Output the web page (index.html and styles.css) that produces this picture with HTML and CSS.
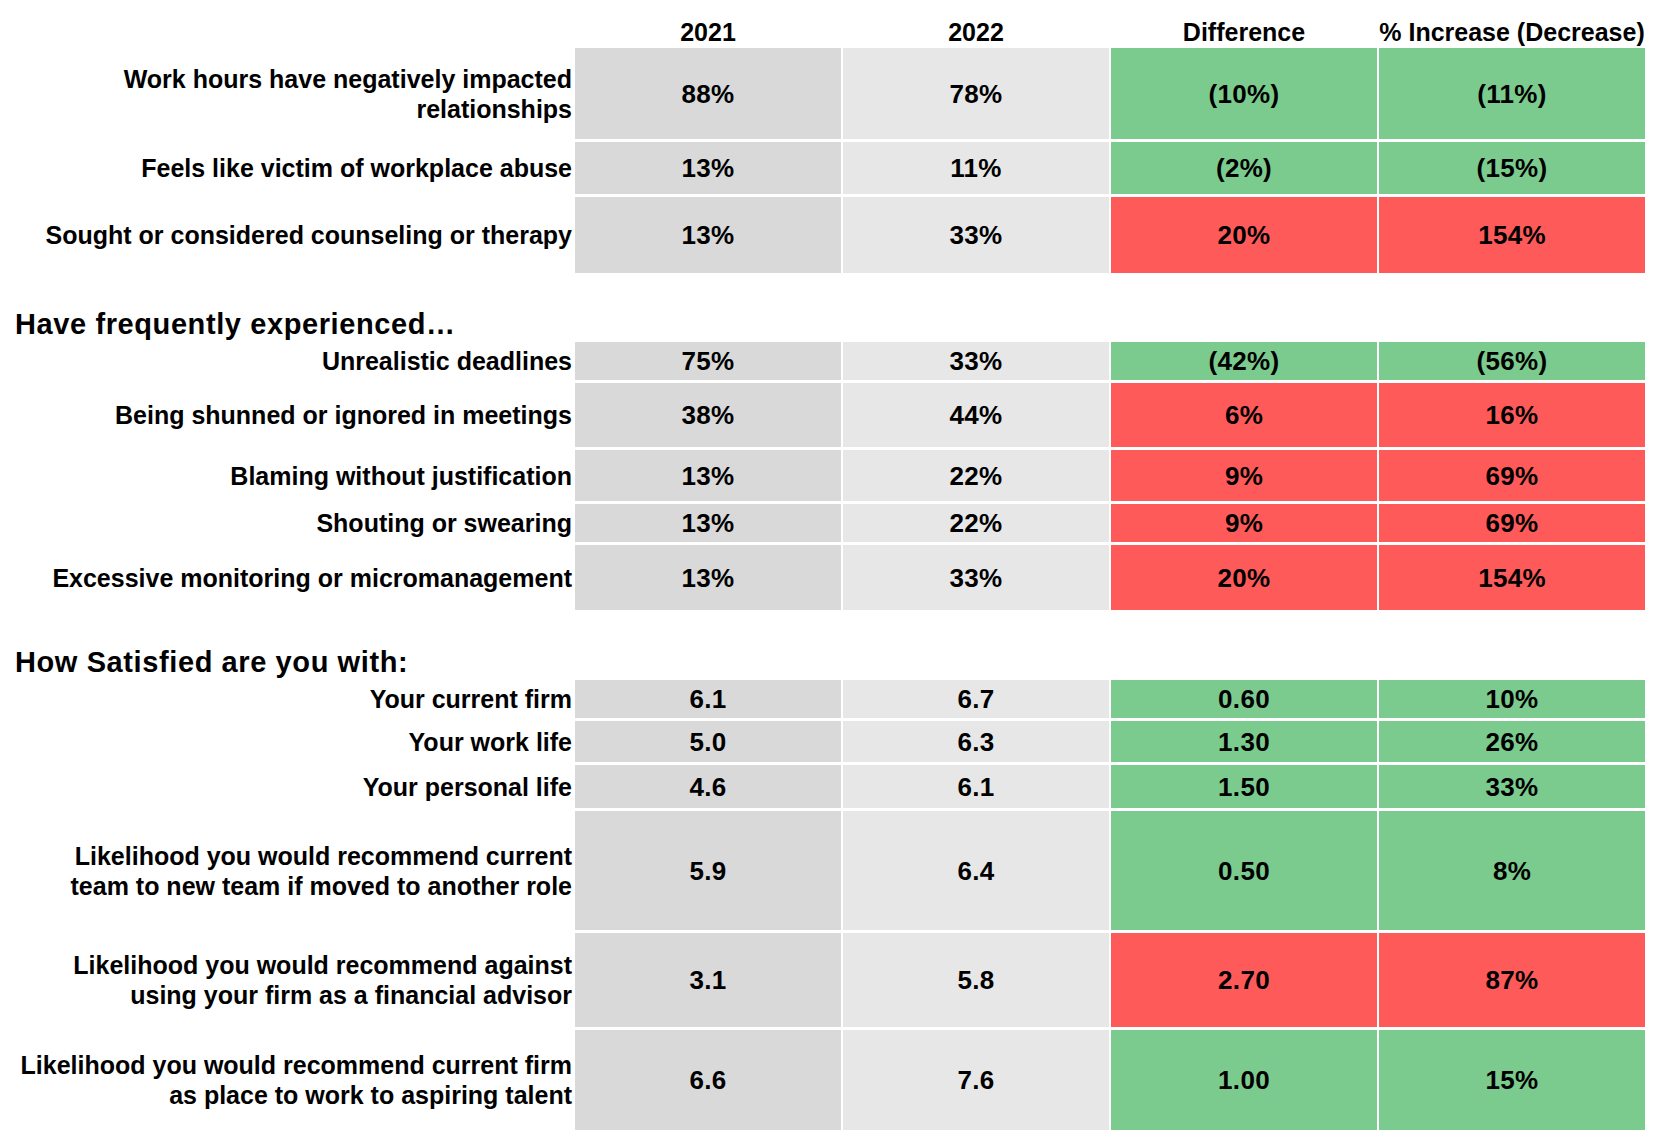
FILE: index.html
```html
<!DOCTYPE html>
<html>
<head>
<meta charset="utf-8">
<link rel="stylesheet" href="styles.css">
</head>
<body>
<div class="sheet">
  <div class="row head">
    <div class="label"></div>
    <div class="hcell">2021</div>
    <div class="hcell">2022</div>
    <div class="hcell">Difference</div>
    <div class="hcell">% Increase (Decrease)</div>
  </div>

  <div class="row h91">
    <div class="label">Work hours have negatively impacted<br>relationships</div>
    <div class="cell y1">88%</div><div class="cell y2">78%</div><div class="cell good">(10%)</div><div class="cell good">(11%)</div>
  </div>
  <div class="row h52">
    <div class="label">Feels like victim of workplace abuse</div>
    <div class="cell y1">13%</div><div class="cell y2">11%</div><div class="cell good">(2%)</div><div class="cell good">(15%)</div>
  </div>
  <div class="row h76">
    <div class="label">Sought or considered counseling or therapy</div>
    <div class="cell y1">13%</div><div class="cell y2">33%</div><div class="cell bad">20%</div><div class="cell bad">154%</div>
  </div>

  <div class="section s1">Have frequently experienced…</div>

  <div class="row h38">
    <div class="label">Unrealistic deadlines</div>
    <div class="cell y1">75%</div><div class="cell y2">33%</div><div class="cell good">(42%)</div><div class="cell good">(56%)</div>
  </div>
  <div class="row h64">
    <div class="label">Being shunned or ignored in meetings</div>
    <div class="cell y1">38%</div><div class="cell y2">44%</div><div class="cell bad">6%</div><div class="cell bad">16%</div>
  </div>
  <div class="row h51">
    <div class="label">Blaming without justification</div>
    <div class="cell y1">13%</div><div class="cell y2">22%</div><div class="cell bad">9%</div><div class="cell bad">69%</div>
  </div>
  <div class="row h38">
    <div class="label">Shouting or swearing</div>
    <div class="cell y1">13%</div><div class="cell y2">22%</div><div class="cell bad">9%</div><div class="cell bad">69%</div>
  </div>
  <div class="row h65">
    <div class="label">Excessive monitoring or micromanagement</div>
    <div class="cell y1">13%</div><div class="cell y2">33%</div><div class="cell bad">20%</div><div class="cell bad">154%</div>
  </div>

  <div class="section s2">How Satisfied are you with:</div>

  <div class="row h38">
    <div class="label">Your current firm</div>
    <div class="cell y1">6.1</div><div class="cell y2">6.7</div><div class="cell good">0.60</div><div class="cell good">10%</div>
  </div>
  <div class="row h41">
    <div class="label">Your work life</div>
    <div class="cell y1">5.0</div><div class="cell y2">6.3</div><div class="cell good">1.30</div><div class="cell good">26%</div>
  </div>
  <div class="row h43">
    <div class="label">Your personal life</div>
    <div class="cell y1">4.6</div><div class="cell y2">6.1</div><div class="cell good">1.50</div><div class="cell good">33%</div>
  </div>
  <div class="row h119">
    <div class="label">Likelihood you would recommend current<br>team to new team if moved to another role</div>
    <div class="cell y1">5.9</div><div class="cell y2">6.4</div><div class="cell good">0.50</div><div class="cell good">8%</div>
  </div>
  <div class="row h94">
    <div class="label">Likelihood you would recommend against<br>using your firm as a financial advisor</div>
    <div class="cell y1">3.1</div><div class="cell y2">5.8</div><div class="cell bad">2.70</div><div class="cell bad">87%</div>
  </div>
  <div class="row h100">
    <div class="label">Likelihood you would recommend current firm<br>as place to work to aspiring talent</div>
    <div class="cell y1">6.6</div><div class="cell y2">7.6</div><div class="cell good">1.00</div><div class="cell good">15%</div>
  </div>
</div>
</body>
</html>
```

FILE: styles.css
```css
*, *::before, *::after {
  box-sizing: border-box;
}

html, body {
  margin: 0;
  padding: 0;
  background: #ffffff;
}

.sheet {
  font-family: "Liberation Sans", Arial, sans-serif;
  font-weight: bold;
  color: #000000;
  display: flex;
  flex-direction: column;
  gap: 3px;
}

.row {
  display: grid;
  grid-template-columns: 573px repeat(4, 266px);
  column-gap: 2px;
}

.label {
  display: flex;
  align-items: center;
  justify-content: flex-end;
  text-align: right;
  padding-right: 1px;
  font-size: 25px;
  line-height: 30px;
  white-space: nowrap;
}

.cell {
  display: flex;
  align-items: center;
  justify-content: center;
  font-size: 26px;
  line-height: 30px;
  letter-spacing: 0.3px;
}

.head {
  height: 45px;
}

.hcell {
  display: flex;
  align-items: flex-end;
  justify-content: center;
  font-size: 25px;
  line-height: 26px;
}

.y1 { background: #d9d9d9; }
.y2 { background: #e7e7e7; }
.good { background: #7bcb8f; }
.bad { background: #ff5a5a; }

.section {
  display: flex;
  align-items: flex-end;
  padding-left: 15px;
  font-size: 29px;
  line-height: 30px;
  letter-spacing: 0.6px;
}
.s1 { height: 63px; }
.s2 { height: 64px; }

.h38 { height: 38px; }
.h41 { height: 41px; }
.h43 { height: 43px; }
.h51 { height: 51px; }
.h52 { height: 52px; }
.h64 { height: 64px; }
.h65 { height: 65px; }
.h76 { height: 76px; }
.h91 { height: 91px; }
.h94 { height: 94px; }
.h100 { height: 100px; }
.h119 { height: 119px; }
```
